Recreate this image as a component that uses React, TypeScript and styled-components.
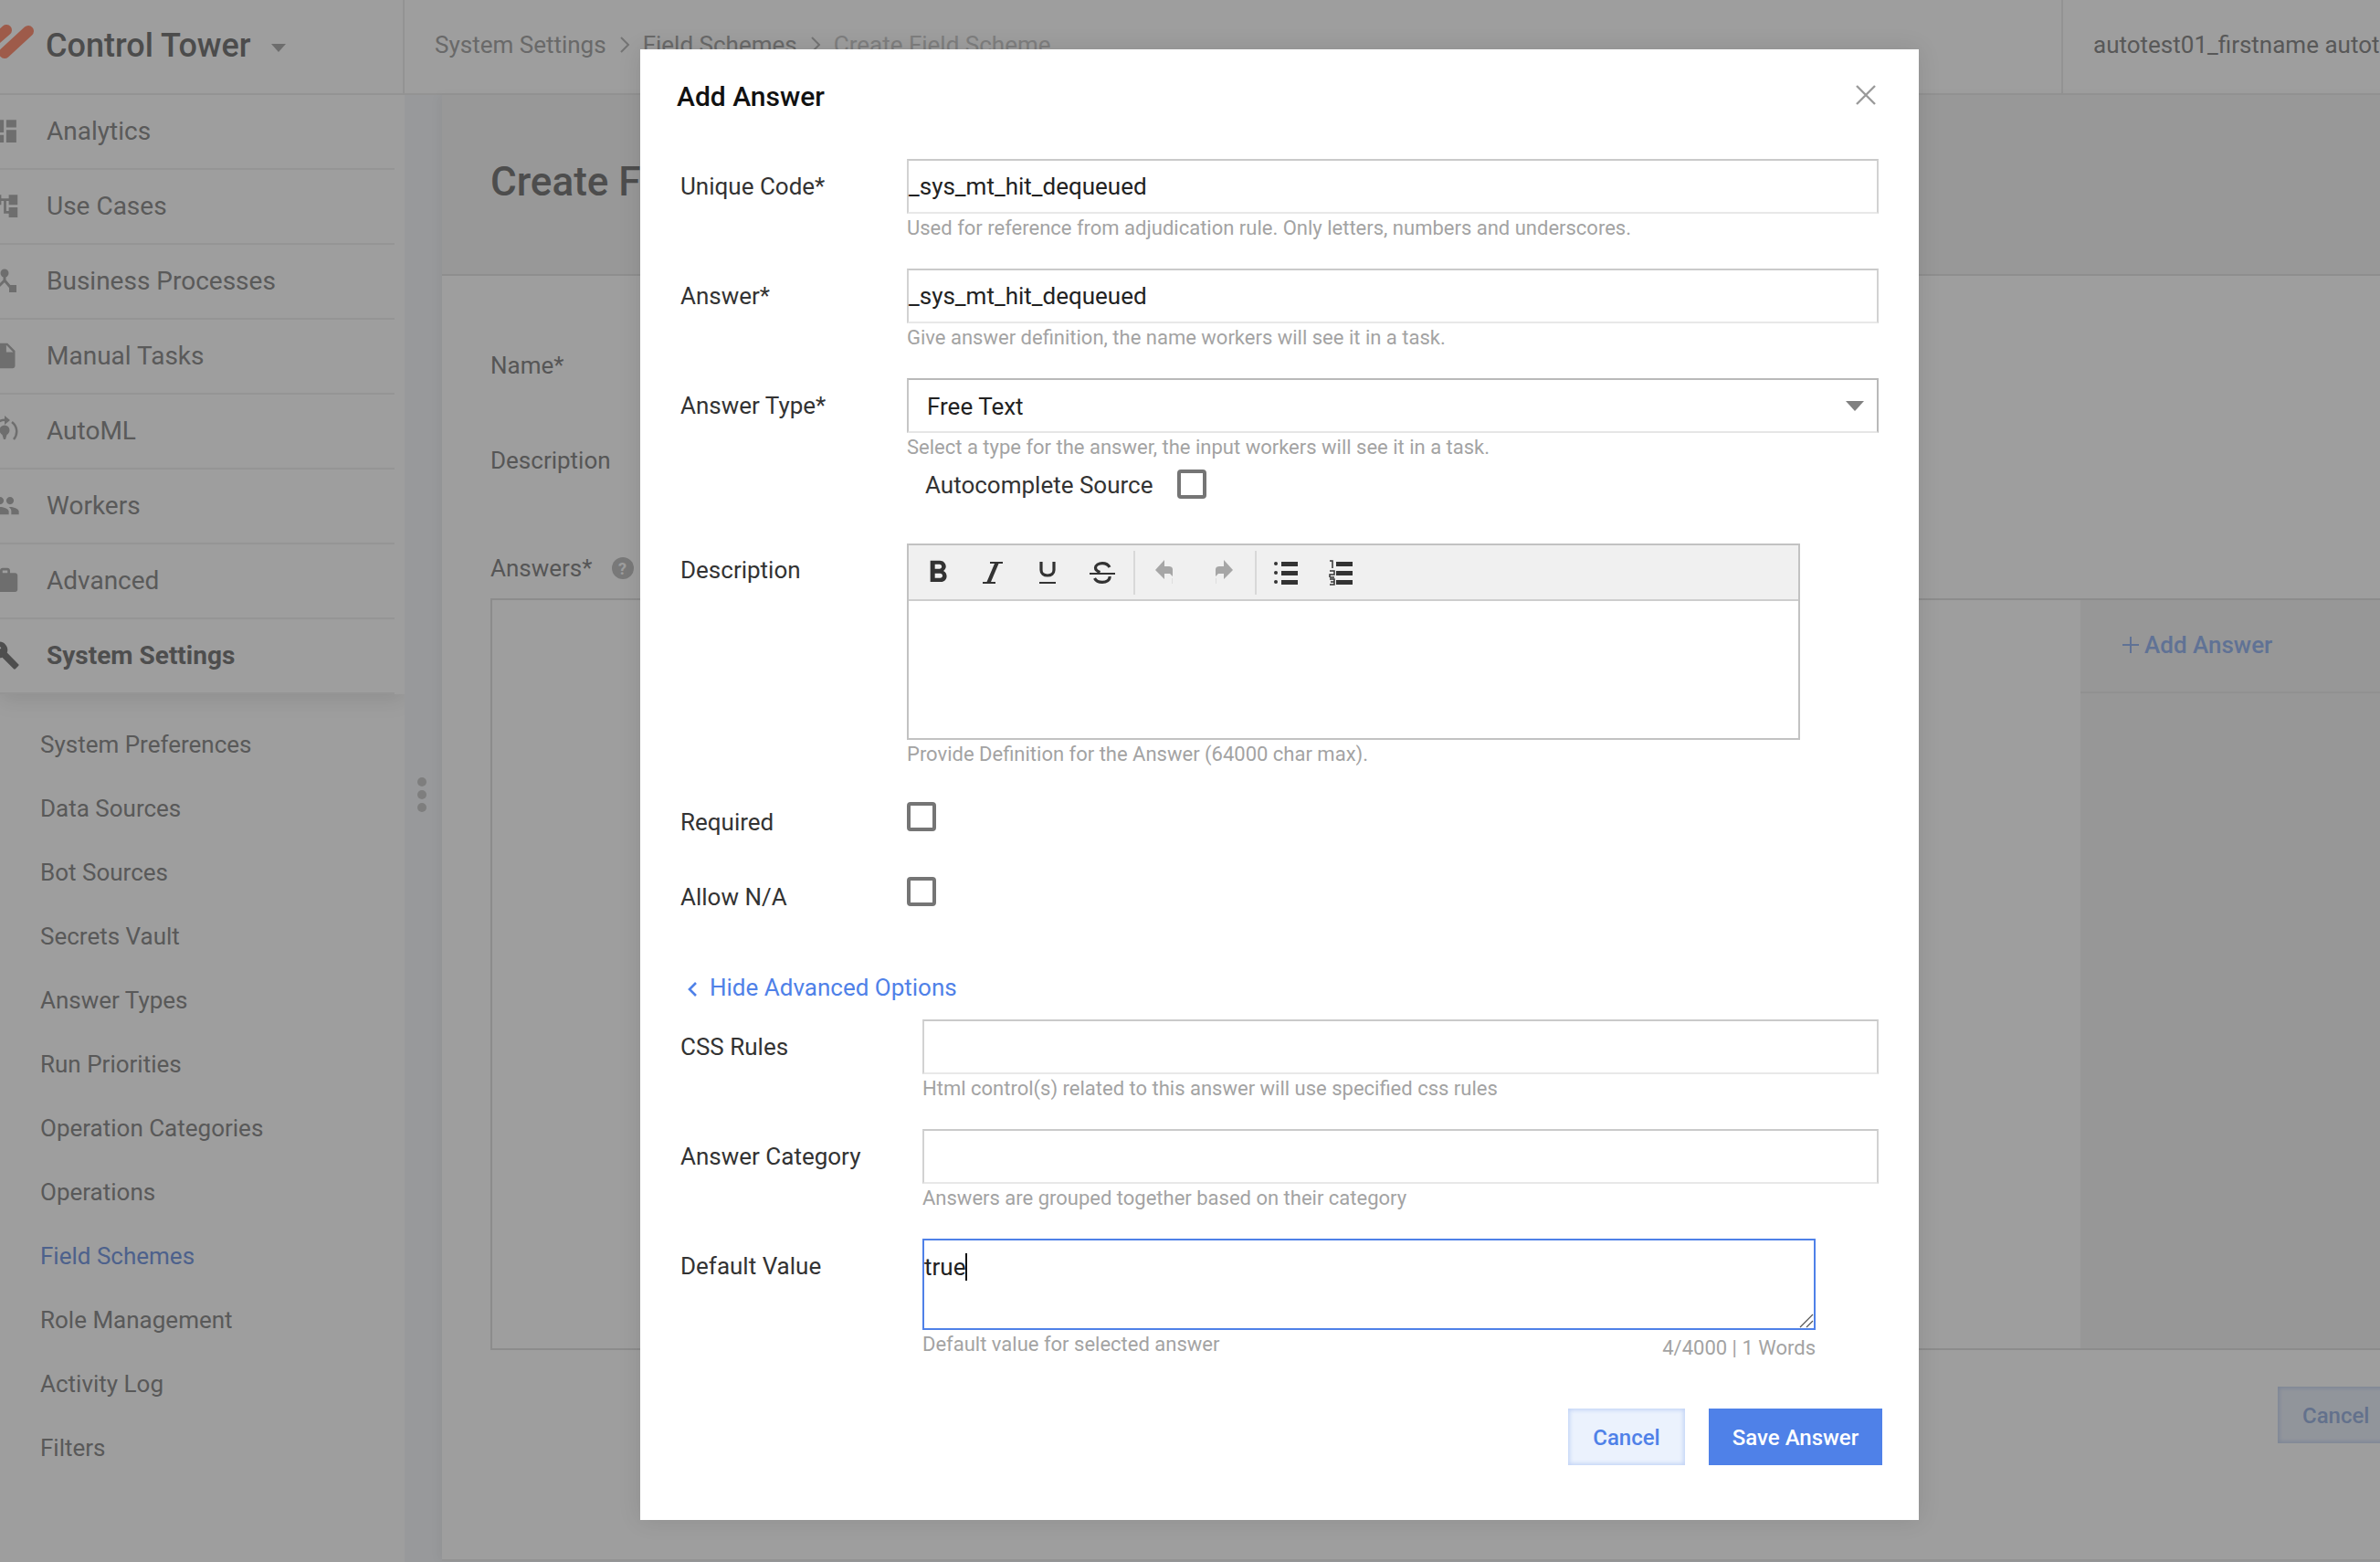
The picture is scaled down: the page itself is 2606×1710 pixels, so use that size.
import React from 'react';
import styled, { createGlobalStyle } from 'styled-components';
import { MdFormatBold } from 'react-icons/md';

const Global = createGlobalStyle`
  html, body { margin: 0; padding: 0; background: #fff; }
  * { box-sizing: border-box; }
  body { font-family: Roboto, "Liberation Sans", sans-serif; }
`;

const Shell = styled.div`
  position: relative;
  width: 2606px;
  height: 1710px;
  overflow: hidden;
  display: flex;
  flex-direction: column;
  background: #f5f7fa;
`;

/* ---------- top bar ---------- */
const TopBar = styled.header`
  flex: none;
  height: 104px;
  display: flex;
  background: #fff;
  border-bottom: 2px solid #eee;
`;
const Brand = styled.div`
  flex: none;
  width: 443px;
  display: flex;
  align-items: center;
  border-right: 2px solid #eee;
  position: relative;
  padding: 0 0 2px 50px;
`;
const BrandName = styled.span`
  font-size: 36px;
  font-weight: 500;
  color: #7b7b7b;
`;
const LogoMark = styled.svg`
  position: absolute;
  left: 0;
  top: 20px;
`;
const BrandCaret = styled.i`
  margin-left: 22px;
  margin-top: 4px;
  border: 8px solid transparent;
  border-top: 9px solid #b0b0b0;
  border-bottom: 0;
`;
const Crumbs = styled.nav`
  flex: 1;
  display: flex;
  align-items: center;
  gap: 13px;
  padding: 0 0 5px 33px;
  font-size: 26px;
  color: #aaa;
`;
const Crumb = styled.span<{ $last?: boolean }>`
  color: ${(p) => (p.$last ? '#ccc' : '#aaa')};
`;
const User = styled.div`
  flex: none;
  width: 349px;
  display: flex;
  align-items: center;
  padding: 0 0 5px 33px;
  border-left: 2px solid #eee;
  font-size: 26px;
  white-space: nowrap;
  color: #8e8e8e;
  overflow: hidden;
`;

/* ---------- body ---------- */
const Body = styled.div`
  flex: 1;
  display: flex;
  min-height: 0;
`;
const Sidebar = styled.aside`
  flex: none;
  width: 443px;
  background: #fff;
  overflow: hidden;
`;
const MainNav = styled.ul`
  margin: 0;
  padding: 0;
  list-style: none;
  box-shadow: 0 6px 22px rgba(0, 0, 0, 0.1);
  position: relative;
`;
const MainItem = styled.li<{ $active?: boolean }>`
  height: 82px;
  display: flex;
  align-items: center;
  margin-right: 11px;
  padding-bottom: 2px;
  border-bottom: 2px solid #f0f0f0;
  font-size: 28px;
  color: ${(p) => (p.$active ? '#7e7e7e' : '#919191')};
  font-weight: ${(p) => (p.$active ? 700 : 400)};
`;
const NavIcon = styled.svg<{ $active?: boolean }>`
  flex: none;
  width: 33px;
  height: 33px;
  margin-left: -11px;
  margin-right: 29px;
  fill: ${(p) => (p.$active ? '#7e7e7e' : '#b2b2b2')};
`;
const SubNav = styled.ul`
  margin: 0;
  padding: 20px 0 0 44px;
  list-style: none;
`;
const SubItem = styled.li<{ $active?: boolean }>`
  height: 70px;
  display: flex;
  align-items: center;
  font-size: 26px;
  color: ${(p) => (p.$active ? '#7c9de2' : '#909090')};
`;
const Gutter = styled.div`
  flex: none;
  width: 41px;
  padding: 747px 3px 0 0;
  display: flex;
  flex-direction: column;
  align-items: center;
  gap: 4px;
`;
const Dot = styled.i`
  width: 10px;
  height: 10px;
  border-radius: 50%;
  background: #ccc;
`;

/* ---------- card under the dialog ---------- */
const Card = styled.main`
  flex: none;
  width: 2300px;
  height: 1605px;
  background: #fff;
  border-bottom: 2px solid #eee;
  box-shadow: -4px 0 10px rgba(0, 0, 0, 0.04);
`;
const CardHead = styled.div`
  height: 198px;
  padding: 65px 0 0 53px;
  background: #f5f5f5;
  border-bottom: 2px solid #e6e6e6;
`;
const CardTitle = styled.h1`
  margin: 0;
  font-size: 44px;
  line-height: 60px;
  font-weight: 500;
  color: #7d7d7d;
`;
const CardBody = styled.div`
  padding: 78px 0 0 53px;
`;
const PlainLabel = styled.div<{ $gap: number }>`
  height: 40px;
  margin-bottom: ${(p) => p.$gap}px;
  display: flex;
  align-items: center;
  gap: 21px;
  font-size: 26px;
  color: #8c8c8c;
`;
const HelpDot = styled.span`
  width: 24px;
  height: 24px;
  border-radius: 50%;
  background: #c4c4c4;
  color: #fff;
  font-size: 18px;
  font-weight: 700;
  display: flex;
  align-items: center;
  justify-content: center;
`;
const AnswersBox = styled.div`
  width: 2400px;
  height: 823px;
  border: 2px solid #e2e2e2;
  display: flex;
  justify-content: flex-start;
  padding-left: 1739px;
`;
const AddPanel = styled.div`
  width: 600px;
  background: #f4f4f4;
`;
const AddRow = styled.div`
  height: 102px;
  display: flex;
  align-items: center;
  gap: 6px;
  padding: 0 0 2px 46px;
  border-bottom: 2px solid #ebebeb;
  font-size: 26px;
  font-weight: 500;
  color: #9bb9f0;
`;
const CardFooter = styled.div`
  padding: 40px 0 0 1957px;
`;
const GhostCancel = styled.div`
  width: 180px;
  height: 62px;
  display: flex;
  align-items: center;
  padding: 2px 0 0 27px;
  font-size: 24px;
  font-weight: 500;
  color: #a0b7e3;
  background: #ebf1fb;
  box-shadow: inset 0 0 4px 2px #cad8f2;
`;

/* ---------- dialog ---------- */
const Overlay = styled.div`
  position: absolute;
  inset: 0;
  background: rgba(0, 0, 0, 0.38);
  padding: 54px 0 0 701px;
`;
const Dialog = styled.section`
  width: 1400px;
  height: 1610px;
  background: #fff;
  padding: 0 44px;
  box-shadow: 0 0 24px rgba(0, 0, 0, 0.1);
`;
const DialogHead = styled.div`
  height: 120px;
  display: flex;
  justify-content: space-between;
  align-items: flex-start;
  padding-top: 30px;
`;
const DialogTitle = styled.h2`
  margin: 0 0 0 -4px;
  font-size: 30px;
  line-height: 44px;
  font-weight: 500;
  color: #111;
`;
const CloseIcon = styled.svg`
  margin-top: 7px;
  margin-right: 1px;
`;
const Row = styled.div<{ $after?: number }>`
  display: flex;
  align-items: flex-start;
  margin-bottom: ${(p) => p.$after ?? 32}px;
`;
const Label = styled.div<{ $w?: number; $line?: number }>`
  flex: none;
  width: ${(p) => p.$w ?? 248}px;
  font-size: 26px;
  line-height: ${(p) => p.$line ?? 60}px;
  color: #333;
`;
const CheckLabel = styled(Label)`
  line-height: 32px;
  margin-top: 6px;
`;
const Control = styled.div`
  flex: 1;
  min-width: 0;
`;
const Field = styled.div<{ $dark?: boolean }>`
  height: 60px;
  display: flex;
  align-items: center;
  padding-left: 0;
  border: 2px solid;
  border-color: ${(p) =>
    p.$dark ? '#b9b9b9 #b9b9b9 #e6e6e6 #c6c6c6' : '#cacaca #d2d2d2 #e8e8e8 #d2d2d2'};
  font-size: 26px;
  color: #222;
  background: #fff;
  position: relative;
`;
const SelectValue = styled.span`
  padding: 2px 0 0 20px;
  flex: 1;
`;
const SelectCaret = styled.i`
  margin-right: 14px;
  border: 10px solid transparent;
  border-top: 11px solid #808080;
  border-bottom: 0;
`;
const Hint = styled.div<{ $top?: number }>`
  margin-top: ${(p) => p.$top ?? 4}px;
  font-size: 22px;
  line-height: 24px;
  color: #a3a3a3;
  white-space: nowrap;
`;
const AutoRow = styled.div`
  display: flex;
  align-items: center;
  gap: 26px;
  height: 32px;
  margin: 12px 0 49px 20px;
  font-size: 26px;
  color: #333;
`;
const AutoText = styled.span`
  padding-top: 2px;
`;
const Box = styled.span`
  flex: none;
  display: block;
  width: 32px;
  height: 32px;
  border: 4px solid #757575;
  border-radius: 4px;
  background: #fff;
`;
const Editor = styled.div`
  width: 978px;
  height: 215px;
  border: 2px solid #c2c2c2;
`;
const Toolbar = styled.div`
  height: 61px;
  display: flex;
  align-items: center;
  padding-left: 2px;
  background: #f0f0f0;
  border-bottom: 2px solid #cdcdcd;
`;
const ToolButton = styled.span<{ $faded?: boolean; $shift?: number }>`
  flex: none;
  width: 60px;
  height: 44px;
  display: flex;
  justify-content: center;
  align-items: center;
  color: ${(p) => (p.$faded ? '#a6a6a6' : '#333')};
  margin-left: ${(p) => p.$shift ?? 0}px;
`;
const ToolSep = styled.i`
  flex: none;
  width: 2px;
  height: 48px;
  margin: 0 2px 0 4px;
  background: #d8d8d8;
`;
const AdvancedLink = styled.a`
  display: flex;
  align-items: center;
  gap: 13px;
  height: 32px;
  margin: 67px 0 19px 7px;
  font-size: 26px;
  color: #4f81e8;
  text-decoration: none;
`;
const ChevronLeft = styled.svg`
  margin-top: 3px;
`;
const TextArea = styled.div`
  position: relative;
  width: 978px;
  height: 100px;
  padding: 14px 0 0 0;
  border: 2px solid #4f81e8;
  font-size: 26px;
  line-height: 30px;
  color: #222;
`;
const CaretBar = styled.span`
  display: inline-block;
  width: 2px;
  height: 30px;
  vertical-align: top;
  background: #111;
`;
const Grip = styled.svg`
  position: absolute;
  right: 0;
  bottom: 0;
`;
const AreaFoot = styled.div`
  width: 978px;
  display: flex;
  justify-content: space-between;
`;
const Counter = styled.div`
  margin-top: 8px;
  font-size: 22px;
  line-height: 24px;
  color: #a3a3a3;
`;
const Actions = styled.div`
  display: flex;
  justify-content: flex-end;
  gap: 26px;
  margin: 54px -4px 0 0;
`;
const Button = styled.button<{ $primary?: boolean }>`
  height: 62px;
  padding: 2px 0 0;
  width: ${(p) => (p.$primary ? 190 : 128)}px;
  border: 0;
  font-family: inherit;
  font-size: 24px;
  font-weight: 500;
  color: ${(p) => (p.$primary ? '#fff' : '#4f81e8')};
  background: ${(p) => (p.$primary ? '#4f81e8' : '#ebf2fd')};
  box-shadow: ${(p) => (p.$primary ? 'none' : 'inset 0 0 4px 2px #c4d5f6')};
`;

/* ---------- icons ---------- */
const d = {
  dashboard: 'M3 13h8V3H3v10zm0 8h8v-6H3v6zm10 0h8V11h-8v10zm0-18v6h8V3h-8z',
  tree: 'M22 11V3h-7v3H9V3H2v8h7V8h2v10h4v3h7v-8h-7v3h-2V8h2v3z',
  file: 'M6 2c-1.1 0-1.99.9-1.99 2L4 20c0 1.1.89 2 1.99 2H18c1.1 0 2-.9 2-2V8l-6-6H6zm7 7V3.5L18.5 9H13z',
  people:
    'M16 11c1.66 0 2.99-1.34 2.99-3S17.66 5 16 5c-1.66 0-3 1.34-3 3s1.34 3 3 3zm-8 0c1.66 0 2.99-1.34 2.99-3S9.66 5 8 5C6.34 5 5 6.34 5 8s1.34 3 3 3zm0 2c-2.33 0-7 1.17-7 3.5V19h14v-2.5c0-2.33-4.67-3.5-7-3.5zm8 0c-.29 0-.62.02-.97.05 1.16.84 1.97 1.97 1.97 3.45V19h6v-2.5c0-2.33-4.67-3.5-7-3.5z',
  work: 'M20 6h-4V4c0-1.11-.89-2-2-2h-4c-1.11 0-1.99.89-1.99 2L2 19c0 1.11.89 2 2 2h16c1.11 0 2-.89 2-2V8c0-1.11-.89-2-2-2zm-6 0h-4V4h4v2z',
  build:
    'M22.7 19l-9.1-9.1c.9-2.3.4-5-1.5-6.9-2-2-5-2.4-7.4-1.3L9 6 6 9 1.6 4.7C.4 7.1.9 10.1 2.9 12.1c1.9 1.9 4.6 2.4 6.9 1.5l9.1 9.1c.4.4 1 .4 1.4 0l2.3-2.3c.5-.4.5-1.1.1-1.4z',
};

const Glyph = ({ path, active }: { path: string; active?: boolean }) => (
  <NavIcon viewBox="0 0 24 24" $active={active}>
    <path d={path} />
  </NavIcon>
);

const ProcessIcon = () => (
  <NavIcon viewBox="0 0 33 33">
    <circle cx="16" cy="8" r="4.5" />
    <path d="M16 10v6l6 7M16 16l-9 9" stroke="#b2b2b2" strokeWidth="3" fill="none" />
    <rect x="21" y="21" width="8" height="8" />
  </NavIcon>
);

const AutoMlIcon = () => (
  <NavIcon viewBox="0 0 33 33">
    <circle cx="16" cy="16" r="5.5" />
    <path d="M13.5 21h5l-1.5 5h-2z" />
    <path d="M24 7a13 13 0 0 1 2 19M9 7a13 13 0 0 1 9-2" stroke="#b2b2b2" strokeWidth="2.5" fill="none" />
    <path d="M16 0l6 5-6 5z" />
  </NavIcon>
);

const ItalicIcon = () => (
  <svg width="22" height="24" viewBox="0 0 22 24" fill="#333">
    <path d="M8 0h14v2H8zM0 22h14v2H0zM13 2h4.5L9 22H4.5z" />
  </svg>
);

const UnderlineIcon = () => (
  <svg width="18" height="24" viewBox="0 0 18 24" fill="none" stroke="#333">
    <path d="M2 0v9c0 4 3 6 7 6s7-2 7-6V0" strokeWidth="3.2" />
    <path d="M0 23h18" strokeWidth="2" />
  </svg>
);

const StrikeIcon = () => (
  <svg width="28" height="24" viewBox="0 0 28 24" fill="none" stroke="#333">
    <path d="M0 13h28" strokeWidth="2" />
    <path d="M22 6C20.5 3 17.5 1.6 14 1.6c-4 0-7.500 2-7.500 5 0 2.500 2 4 5 5M22 16c.5 4-3.500 6.400-8 6.400-3.500 0-7-1.400-8.500-4.400" strokeWidth="3.2" />
  </svg>
);

const UndoIcon = ({ flip }: { flip?: boolean }) => (
  <svg width="20" height="28" viewBox="0 0 20 28" fill="currentColor" style={flip ? { transform: 'scaleX(-1)' } : undefined}>
    <path d="M10 0L0 11l10 10v-6h6l3 3v-8c0-2-2-3-4-3h-5z" />
    <path d="M18 20h1v6h-1z" opacity="0.25" />
  </svg>
);

const ListBullets = () => (
  <svg width="26" height="26" viewBox="0 0 26 26" fill="#333">
    <circle cx="2" cy="3" r="2" />
    <circle cx="2" cy="13" r="2" />
    <circle cx="2" cy="23" r="2" />
    <rect x="8" y="1" width="18" height="5" />
    <rect x="8" y="11" width="18" height="5" />
    <rect x="8" y="21" width="18" height="5" />
  </svg>
);

const ListNumbers = () => (
  <svg width="26" height="28" viewBox="0 0 26 28" fill="none">
    <path d="M1 1h3v8M1 12h5v4H1v3M6 19H1M1 21h5v6H1M2 24h4" stroke="#333" strokeWidth="1.5" />
    <rect x="8" y="2" width="18" height="5" fill="#333" />
    <rect x="8" y="12" width="18" height="5" fill="#333" />
    <rect x="8" y="22" width="18" height="5" fill="#333" />
  </svg>
);

const mainItems: { label: string; icon: React.ReactNode }[] = [
  { label: 'Analytics', icon: <Glyph path={d.dashboard} /> },
  { label: 'Use Cases', icon: <Glyph path={d.tree} /> },
  { label: 'Business Processes', icon: <ProcessIcon /> },
  { label: 'Manual Tasks', icon: <Glyph path={d.file} /> },
  { label: 'AutoML', icon: <AutoMlIcon /> },
  { label: 'Workers', icon: <Glyph path={d.people} /> },
  { label: 'Advanced', icon: <Glyph path={d.work} /> },
];

const subItems = [
  'System Preferences',
  'Data Sources',
  'Bot Sources',
  'Secrets Vault',
  'Answer Types',
  'Run Priorities',
  'Operation Categories',
  'Operations',
  'Field Schemes',
  'Role Management',
  'Activity Log',
  'Filters',
];

const Chevron = ({ color = '#bbb' }: { color?: string }) => (
  <svg width="14" height="22" viewBox="0 0 14 22" fill="none">
    <path d="M3 3l8 8-8 8" stroke={color} strokeWidth="2" />
  </svg>
);

export default function App() {
  return (
    <>
      <Global />
      <Shell>
        <TopBar>
          <Brand>
            <LogoMark width="44" height="48" viewBox="0 0 44 48">
              <path d="M5 38L31 14" stroke="#ff9378" strokeWidth="12" strokeLinecap="round" />
              <path d="M-8 26L7 13" stroke="#ff9378" strokeWidth="12" strokeLinecap="round" />
            </LogoMark>
            <BrandName>Control Tower</BrandName>
            <BrandCaret />
          </Brand>
          <Crumbs>
            <Crumb>System Settings</Crumb>
            <Chevron />
            <Crumb>Field Schemes</Crumb>
            <Chevron />
            <Crumb $last>Create Field Scheme</Crumb>
          </Crumbs>
          <User>autotest01_firstname autotest01_lastname</User>
        </TopBar>
        <Body>
          <Sidebar>
            <MainNav>
              {mainItems.map((m) => (
                <MainItem key={m.label}>
                  {m.icon}
                  {m.label}
                </MainItem>
              ))}
              <MainItem $active>
                <Glyph path={d.build} active />
                System Settings
              </MainItem>
            </MainNav>
            <SubNav>
              {subItems.map((s) => (
                <SubItem key={s} $active={s === 'Field Schemes'}>
                  {s}
                </SubItem>
              ))}
            </SubNav>
          </Sidebar>
          <Gutter>
            <Dot />
            <Dot />
            <Dot />
          </Gutter>
          <Card>
            <CardHead>
              <CardTitle>Create Field Scheme</CardTitle>
            </CardHead>
            <CardBody>
              <PlainLabel $gap={64}>Name*</PlainLabel>
              <PlainLabel $gap={78}>Description</PlainLabel>
              <PlainLabel $gap={13}>
                Answers*
                <HelpDot>?</HelpDot>
              </PlainLabel>
              <AnswersBox>
                <AddPanel>
                  <AddRow>
                    <svg width="18" height="18" viewBox="0 0 18 18" fill="none">
                      <path d="M9 0v18M0 9h18" stroke="#9bb9f0" strokeWidth="2" />
                    </svg>
                    Add Answer
                  </AddRow>
                </AddPanel>
              </AnswersBox>
              <CardFooter>
                <GhostCancel>Cancel</GhostCancel>
              </CardFooter>
            </CardBody>
          </Card>
        </Body>

        <Overlay>
          <Dialog>
            <DialogHead>
              <DialogTitle>Add Answer</DialogTitle>
              <CloseIcon width="26" height="26" viewBox="0 0 26 26" fill="none">
                <path d="M3 3l20 20M23 3L3 23" stroke="#9a9a9a" strokeWidth="2.4" />
              </CloseIcon>
            </DialogHead>

            <Row>
              <Label>Unique Code*</Label>
              <Control>
                <Field>_sys_mt_hit_dequeued</Field>
                <Hint>Used for reference from adjudication rule. Only letters, numbers and underscores.</Hint>
              </Control>
            </Row>
            <Row>
              <Label>Answer*</Label>
              <Control>
                <Field>_sys_mt_hit_dequeued</Field>
                <Hint>Give answer definition, the name workers will see it in a task.</Hint>
              </Control>
            </Row>
            <Row $after={0}>
              <Label>Answer Type*</Label>
              <Control>
                <Field $dark>
                  <SelectValue>Free Text</SelectValue>
                  <SelectCaret />
                </Field>
                <Hint>Select a type for the answer, the input workers will see it in a task.</Hint>
                <AutoRow>
                  <AutoText>Autocomplete Source</AutoText>
                  <Box />
                </AutoRow>
              </Control>
            </Row>
            <Row $after={40}>
              <Label $line={58}>Description</Label>
              <Control>
                <Editor>
                  <Toolbar>
                    <ToolButton><MdFormatBold size={40} /></ToolButton>
                    <ToolButton><ItalicIcon /></ToolButton>
                    <ToolButton><UnderlineIcon /></ToolButton>
                    <ToolButton><StrikeIcon /></ToolButton>
                    <ToolSep />
                    <ToolButton $faded><UndoIcon /></ToolButton>
                    <ToolButton $faded $shift={5}><UndoIcon flip /></ToolButton>
                    <ToolSep />
                    <ToolButton><ListBullets /></ToolButton>
                    <ToolButton><ListNumbers /></ToolButton>
                  </Toolbar>
                </Editor>
                <Hint $top={4}>Provide Definition for the Answer (64000 char max).</Hint>
              </Control>
            </Row>
            <Row $after={44}>
              <CheckLabel>Required</CheckLabel>
              <Box />
            </Row>
            <Row $after={0}>
              <CheckLabel>Allow N/A</CheckLabel>
              <Box />
            </Row>

            <AdvancedLink>
              <ChevronLeft width="12" height="18" viewBox="0 0 12 18" fill="none">
                <path d="M10 2L3 9l7 7" stroke="#4f81e8" strokeWidth="2.6" />
              </ChevronLeft>
              Hide Advanced Options
            </AdvancedLink>

            <Row>
              <Label $w={265}>CSS Rules</Label>
              <Control>
                <Field />
                <Hint>Html control(s) related to this answer will use specified css rules</Hint>
              </Control>
            </Row>
            <Row>
              <Label $w={265}>Answer Category</Label>
              <Control>
                <Field />
                <Hint>Answers are grouped together based on their category</Hint>
              </Control>
            </Row>
            <Row $after={0}>
              <Label $w={265}>Default Value</Label>
              <Control>
                <TextArea>
                  true
                  <CaretBar />
                  <Grip width="16" height="16" viewBox="0 0 16 16" fill="none">
                    <path d="M15 1L1 15M15 8l-7 7" stroke="#555" strokeWidth="1.2" />
                  </Grip>
                </TextArea>
                <AreaFoot>
                  <Hint $top={4}>Default value for selected answer</Hint>
                  <Counter>4/4000 | 1 Words</Counter>
                </AreaFoot>
              </Control>
            </Row>

            <Actions>
              <Button>Cancel</Button>
              <Button $primary>Save Answer</Button>
            </Actions>
          </Dialog>
        </Overlay>
      </Shell>
    </>
  );
}
